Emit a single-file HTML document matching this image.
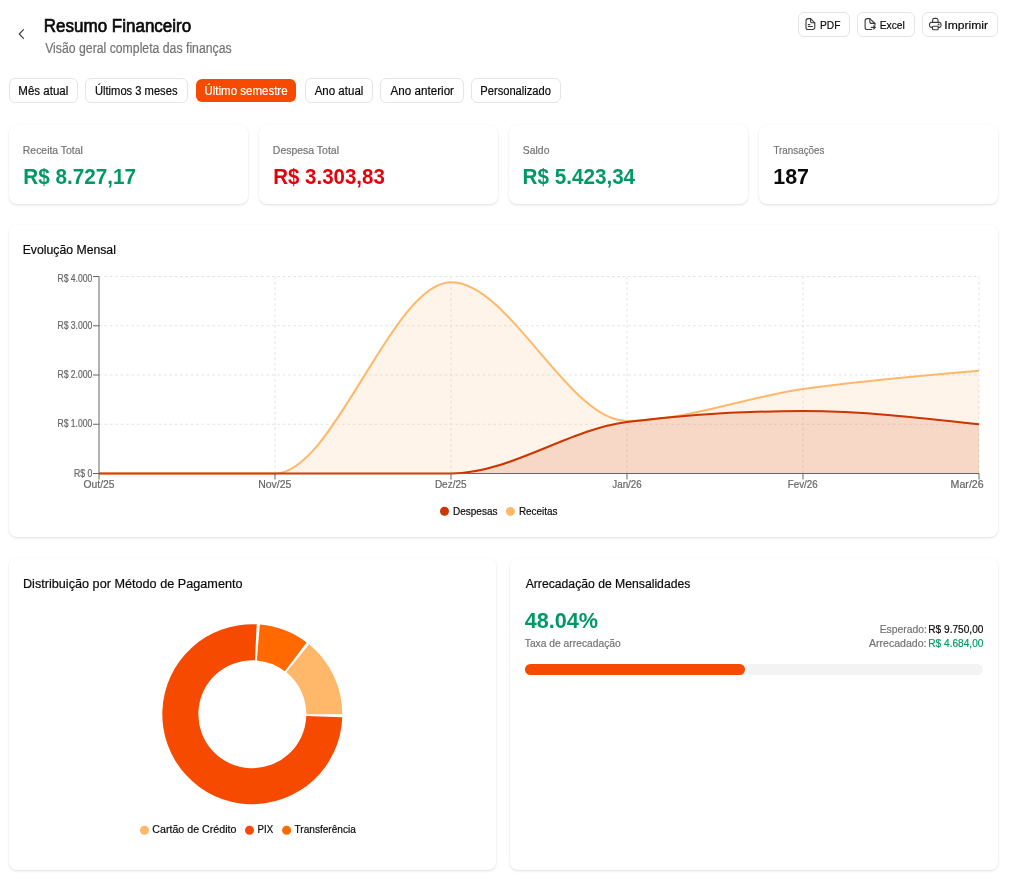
<!DOCTYPE html>
<html lang="pt-BR"><head><meta charset="utf-8"><title>Resumo Financeiro</title>
<style>
html,body{margin:0;padding:0;background:#fff;width:1013px;height:886px;overflow:hidden;}
body{position:relative;font-family:"Liberation Sans",sans-serif;}
.btn{position:absolute;box-sizing:border-box;border:1px solid #e5e5e5;border-radius:6px;background:#fff;}
.act{background:#f54a00;border:none;}
.card{position:absolute;box-sizing:border-box;border-radius:8px;background:#fff;box-shadow:0 1px 3px 0 rgba(0,0,0,0.1),0 1px 2px -1px rgba(0,0,0,0.1);}
.track{position:absolute;background:#f3f3f3;border-radius:6px;}
.fill{position:absolute;background:#f54a00;border-radius:6px;}
svg{position:absolute;left:0;top:0;will-change:transform;}
text{font-family:"Liberation Sans",sans-serif;}
</style></head><body>
<div class="btn" style="left:798px;top:12px;width:52px;height:25px;"></div><div class="btn" style="left:857px;top:12px;width:58px;height:25px;"></div><div class="btn" style="left:922px;top:12px;width:76px;height:25px;"></div><div class="btn" style="left:9px;top:78px;width:69px;height:25px;"></div><div class="btn" style="left:85px;top:78px;width:103px;height:25px;"></div><div class="btn" style="left:305px;top:78px;width:68px;height:25px;"></div><div class="btn" style="left:380px;top:78px;width:84px;height:25px;"></div><div class="btn" style="left:471px;top:78px;width:90px;height:25px;"></div><div class="btn act" style="left:196px;top:78.9px;width:100px;height:23.2px;"></div><div class="card" style="left:9px;top:125px;width:239px;height:79px;"></div><div class="card" style="left:259px;top:125px;width:239px;height:79px;"></div><div class="card" style="left:509px;top:125px;width:239px;height:79px;"></div><div class="card" style="left:759px;top:125px;width:239px;height:79px;"></div><div class="card" style="left:9px;top:225px;width:989px;height:312px;"></div><div class="card" style="left:9px;top:558px;width:487px;height:312px;"></div><div class="card" style="left:510px;top:558px;width:488px;height:312px;"></div><div class="track" style="left:525px;top:664px;width:458px;height:10.5px;"></div><div class="fill" style="left:525px;top:664px;width:220px;height:10.5px;"></div>
<svg width="1013" height="886" viewBox="0 0 1013 886">
<line x1="99.0" y1="473.5" x2="979.0" y2="473.5" stroke="#e3e3e3" stroke-dasharray="2.7 2.7"/><line x1="99.0" y1="424.25" x2="979.0" y2="424.25" stroke="#e3e3e3" stroke-dasharray="2.7 2.7"/><line x1="99.0" y1="375.0" x2="979.0" y2="375.0" stroke="#e3e3e3" stroke-dasharray="2.7 2.7"/><line x1="99.0" y1="325.75" x2="979.0" y2="325.75" stroke="#e3e3e3" stroke-dasharray="2.7 2.7"/><line x1="99.0" y1="276.5" x2="979.0" y2="276.5" stroke="#e3e3e3" stroke-dasharray="2.7 2.7"/><line x1="275.0" y1="276.5" x2="275.0" y2="473.5" stroke="#e3e3e3" stroke-dasharray="2.7 2.7"/><line x1="451.0" y1="276.5" x2="451.0" y2="473.5" stroke="#e3e3e3" stroke-dasharray="2.7 2.7"/><line x1="627.0" y1="276.5" x2="627.0" y2="473.5" stroke="#e3e3e3" stroke-dasharray="2.7 2.7"/><line x1="803.0" y1="276.5" x2="803.0" y2="473.5" stroke="#e3e3e3" stroke-dasharray="2.7 2.7"/><line x1="979.0" y1="276.5" x2="979.0" y2="473.5" stroke="#e3e3e3" stroke-dasharray="2.7 2.7"/><path d="M99.00,473.50C157.67,473.50,216.33,473.50,275.00,473.50C333.67,473.50,392.33,282.21,451.00,282.21C509.67,282.21,568.33,421.05,627.00,421.05C685.67,421.05,744.33,397.43,803.00,389.04C861.67,380.65,920.33,375.68,979.00,370.72L979.0,473.5L99.0,473.5Z" fill="#ffb86a" fill-opacity="0.15"/><path d="M99.00,473.50C157.67,473.50,216.33,473.50,275.00,473.50C333.67,473.50,392.33,282.21,451.00,282.21C509.67,282.21,568.33,421.05,627.00,421.05C685.67,421.05,744.33,397.43,803.00,389.04C861.67,380.65,920.33,375.68,979.00,370.72" fill="none" stroke="#ffb86a" stroke-width="2"/><path d="M99.00,473.50C157.67,473.50,216.33,473.50,275.00,473.50C333.67,473.50,392.33,473.50,451.00,473.50C509.67,473.50,568.33,429.36,627.00,422.03C685.67,414.71,744.33,411.05,803.00,411.05C861.67,411.05,920.33,417.63,979.00,424.20L979.0,473.5L99.0,473.5Z" fill="#ca3500" fill-opacity="0.15"/><path d="M99.00,473.50C157.67,473.50,216.33,473.50,275.00,473.50C333.67,473.50,392.33,473.50,451.00,473.50C509.67,473.50,568.33,429.36,627.00,422.03C685.67,414.71,744.33,411.05,803.00,411.05C861.67,411.05,920.33,417.63,979.00,424.20" fill="none" stroke="#ca3500" stroke-width="2"/><line x1="99.0" y1="276.5" x2="99.0" y2="473.5" stroke="#666"/><line x1="99.0" y1="473.5" x2="979.0" y2="473.5" stroke="#666"/><line x1="93.0" y1="473.5" x2="99.0" y2="473.5" stroke="#666"/><line x1="93.0" y1="424.25" x2="99.0" y2="424.25" stroke="#666"/><line x1="93.0" y1="375.0" x2="99.0" y2="375.0" stroke="#666"/><line x1="93.0" y1="325.75" x2="99.0" y2="325.75" stroke="#666"/><line x1="93.0" y1="276.5" x2="99.0" y2="276.5" stroke="#666"/><line x1="99.0" y1="473.5" x2="99.0" y2="479.5" stroke="#666"/><line x1="275.0" y1="473.5" x2="275.0" y2="479.5" stroke="#666"/><line x1="451.0" y1="473.5" x2="451.0" y2="479.5" stroke="#666"/><line x1="627.0" y1="473.5" x2="627.0" y2="479.5" stroke="#666"/><line x1="803.0" y1="473.5" x2="803.0" y2="479.5" stroke="#666"/><line x1="979.0" y1="473.5" x2="979.0" y2="479.5" stroke="#666"/><circle cx="444.5" cy="511.3" r="4.5" fill="#ca3500"/><circle cx="510.4" cy="511.4" r="4.5" fill="#ffb86a"/>
<path d="M342.30,714.20A90,90,0,0,0,309.06,644.36L286.36,672.29A54,54,0,0,1,306.30,714.20Z" fill="#ffb86a"/><path d="M306.59,642.42A90,90,0,0,0,259.83,624.52L256.82,660.39A54,54,0,0,1,284.87,671.13Z" fill="#ff6900"/><path d="M256.70,624.31A90,90,0,1,0,342.25,717.34L306.27,716.08A54,54,0,1,1,254.94,660.26Z" fill="#f54a00"/><circle cx="144.5" cy="830.3" r="4.5" fill="#ffb86a"/><circle cx="249.5" cy="830.3" r="4.5" fill="#f54a00"/><circle cx="286.6" cy="830.3" r="4.5" fill="#ff6900"/>
<g fill="none" stroke="#404040" stroke-width="1.15" stroke-linecap="round" stroke-linejoin="round"><path d="M23.5,29.6L19.3,34.0L23.5,38.4"/></g><g fill="none" stroke="#3a3a3a" stroke-width="1.1" stroke-linecap="round" stroke-linejoin="round"><path d="M810.6,18.6H808.1a2.1,2.1 0 0 0-2.1,2.1V27.4a2.1,2.1 0 0 0 2.1,2.1H812.7a2.1,2.1 0 0 0 2.1-2.1V22.8Z"/><path d="M810.6,18.6V21.4a1.4,1.4 0 0 0 1.4,1.4H814.8"/><path d="M808.3,24.6H809.9"/><path d="M808.3,26.5H812.4"/></g><g fill="none" stroke="#3a3a3a" stroke-width="1.1" stroke-linecap="round" stroke-linejoin="round"><path d="M871.8,29.5H867.2a2.1,2.1 0 0 1-2.1-2.1V20.7a2.1,2.1 0 0 1 2.1-2.1H869.8L874.9,23.5V25.6"/><path d="M869.8,18.6V21.4a2,2 0 0 0 2,2H874.9"/><path d="M871.2,27.4H875.2"/><path d="M873.6,25.8L875.2,27.4L873.6,29.0"/></g><g fill="none" stroke="#3a3a3a" stroke-width="1.1" stroke-linecap="round" stroke-linejoin="round"><path d="M932.6,22.4V20.2a1.8,1.8 0 0 1 1.8-1.8H936.2a1.8,1.8 0 0 1 1.8,1.8V22.4"/><path d="M932.4,27.4H931.4a1.8,1.8 0 0 1-1.8-1.8V24.2a1.8,1.8 0 0 1 1.8-1.8H939.2a1.8,1.8 0 0 1 1.8,1.8V25.6a1.8,1.8 0 0 1-1.8,1.8H938.2"/><path d="M933.4,26.2H937.3a0.9,0.9 0 0 1 0.9,0.9V28.9a0.9,0.9 0 0 1-0.9,0.9H933.4a0.9,0.9 0 0 1-0.9-0.9V27.1a0.9,0.9 0 0 1 0.9-0.9Z"/><circle cx="938.6" cy="24.4" r="0.35" fill="#3a3a3a"/></g>
<text x="43.81" y="32.10" font-size="18.75" font-weight="normal" fill="#0a0a0a" stroke="#0a0a0a" stroke-width="0.7" textLength="147.41" lengthAdjust="spacingAndGlyphs">Resumo Financeiro</text><text x="45.15" y="53.00" font-size="14" font-weight="normal" fill="#737373" stroke="#737373" stroke-width="0.2" textLength="186.50" lengthAdjust="spacingAndGlyphs">Visão geral completa das finanças</text><text x="819.96" y="29.00" font-size="11.6" font-weight="normal" fill="#0a0a0a" stroke="#0a0a0a" stroke-width="0.2" textLength="20.45" lengthAdjust="spacingAndGlyphs">PDF</text><text x="879.65" y="29.00" font-size="11.6" font-weight="normal" fill="#0a0a0a" stroke="#0a0a0a" stroke-width="0.2" textLength="25.24" lengthAdjust="spacingAndGlyphs">Excel</text><text x="944.28" y="29.00" font-size="11.6" font-weight="normal" fill="#0a0a0a" stroke="#0a0a0a" stroke-width="0.2" textLength="43.72" lengthAdjust="spacingAndGlyphs">Imprimir</text><text x="18.36" y="95.00" font-size="12" font-weight="normal" fill="#0a0a0a" stroke="#0a0a0a" stroke-width="0.2" textLength="49.91" lengthAdjust="spacingAndGlyphs">Mês atual</text><text x="94.94" y="95.00" font-size="12" font-weight="normal" fill="#0a0a0a" stroke="#0a0a0a" stroke-width="0.2" textLength="82.57" lengthAdjust="spacingAndGlyphs">Últimos 3 meses</text><text x="204.51" y="95.00" font-size="12" font-weight="normal" fill="#ffffff" stroke="#ffffff" stroke-width="0.2" textLength="83.10" lengthAdjust="spacingAndGlyphs">Último semestre</text><text x="314.68" y="95.00" font-size="12" font-weight="normal" fill="#0a0a0a" stroke="#0a0a0a" stroke-width="0.2" textLength="48.69" lengthAdjust="spacingAndGlyphs">Ano atual</text><text x="390.58" y="95.00" font-size="12" font-weight="normal" fill="#0a0a0a" stroke="#0a0a0a" stroke-width="0.2" textLength="63.42" lengthAdjust="spacingAndGlyphs">Ano anterior</text><text x="480.29" y="95.00" font-size="12" font-weight="normal" fill="#0a0a0a" stroke="#0a0a0a" stroke-width="0.2" textLength="70.68" lengthAdjust="spacingAndGlyphs">Personalizado</text><text x="22.85" y="154.00" font-size="11.2" font-weight="normal" fill="#737373" stroke="#737373" stroke-width="0.2" textLength="59.95" lengthAdjust="spacingAndGlyphs">Receita Total</text><text x="272.84" y="154.00" font-size="11.2" font-weight="normal" fill="#737373" stroke="#737373" stroke-width="0.2" textLength="66.16" lengthAdjust="spacingAndGlyphs">Despesa Total</text><text x="522.83" y="154.00" font-size="11.2" font-weight="normal" fill="#737373" stroke="#737373" stroke-width="0.2" textLength="26.61" lengthAdjust="spacingAndGlyphs">Saldo</text><text x="773.48" y="154.00" font-size="11.2" font-weight="normal" fill="#737373" stroke="#737373" stroke-width="0.2" textLength="50.88" lengthAdjust="spacingAndGlyphs">Transações</text><text x="23.22" y="184.20" font-size="22" font-weight="bold" fill="#009966" textLength="112.69" lengthAdjust="spacingAndGlyphs">R$ 8.727,17</text><text x="273.23" y="184.20" font-size="22" font-weight="bold" fill="#e7000b" textLength="111.61" lengthAdjust="spacingAndGlyphs">R$ 3.303,83</text><text x="522.62" y="184.20" font-size="22" font-weight="bold" fill="#009966" textLength="112.49" lengthAdjust="spacingAndGlyphs">R$ 5.423,34</text><text x="773.25" y="184.20" font-size="22" font-weight="bold" fill="#0a0a0a" textLength="35.69" lengthAdjust="spacingAndGlyphs">187</text><text x="22.70" y="253.60" font-size="12.5" font-weight="normal" fill="#0a0a0a" stroke="#0a0a0a" stroke-width="0.2" textLength="93.22" lengthAdjust="spacingAndGlyphs">Evolução Mensal</text><text x="452.98" y="514.80" font-size="11.2" font-weight="normal" fill="#0a0a0a" stroke="#0a0a0a" stroke-width="0.2" textLength="44.48" lengthAdjust="spacingAndGlyphs">Despesas</text><text x="518.88" y="514.80" font-size="11.2" font-weight="normal" fill="#0a0a0a" stroke="#0a0a0a" stroke-width="0.2" textLength="38.68" lengthAdjust="spacingAndGlyphs">Receitas</text><text x="73.99" y="476.90" font-size="10.2" font-weight="normal" fill="#666666" stroke="#666666" stroke-width="0.2" textLength="18.35" lengthAdjust="spacingAndGlyphs">R$ 0</text><text x="57.49" y="427.00" font-size="10.2" font-weight="normal" fill="#666666" stroke="#666666" stroke-width="0.2" textLength="34.84" lengthAdjust="spacingAndGlyphs">R$ 1.000</text><text x="57.49" y="378.00" font-size="10.2" font-weight="normal" fill="#666666" stroke="#666666" stroke-width="0.2" textLength="34.84" lengthAdjust="spacingAndGlyphs">R$ 2.000</text><text x="57.49" y="329.00" font-size="10.2" font-weight="normal" fill="#666666" stroke="#666666" stroke-width="0.2" textLength="34.84" lengthAdjust="spacingAndGlyphs">R$ 3.000</text><text x="57.49" y="281.90" font-size="10.2" font-weight="normal" fill="#666666" stroke="#666666" stroke-width="0.2" textLength="34.84" lengthAdjust="spacingAndGlyphs">R$ 4.000</text><text x="83.61" y="487.80" font-size="10.2" font-weight="normal" fill="#666666" stroke="#666666" stroke-width="0.2" textLength="30.92" lengthAdjust="spacingAndGlyphs">Out/25</text><text x="258.24" y="487.80" font-size="10.2" font-weight="normal" fill="#666666" stroke="#666666" stroke-width="0.2" textLength="33.10" lengthAdjust="spacingAndGlyphs">Nov/25</text><text x="434.88" y="487.80" font-size="10.2" font-weight="normal" fill="#666666" stroke="#666666" stroke-width="0.2" textLength="31.74" lengthAdjust="spacingAndGlyphs">Dez/25</text><text x="612.35" y="487.80" font-size="10.2" font-weight="normal" fill="#666666" stroke="#666666" stroke-width="0.2" textLength="29.38" lengthAdjust="spacingAndGlyphs">Jan/26</text><text x="787.69" y="487.80" font-size="10.2" font-weight="normal" fill="#666666" stroke="#666666" stroke-width="0.2" textLength="30.04" lengthAdjust="spacingAndGlyphs">Fev/26</text><text x="950.63" y="487.80" font-size="10.2" font-weight="normal" fill="#666666" stroke="#666666" stroke-width="0.2" textLength="33.04" lengthAdjust="spacingAndGlyphs">Mar/26</text><text x="22.96" y="587.80" font-size="12.5" font-weight="normal" fill="#0a0a0a" stroke="#0a0a0a" stroke-width="0.2" textLength="219.57" lengthAdjust="spacingAndGlyphs">Distribuição por Método de Pagamento</text><text x="525.68" y="587.80" font-size="12.5" font-weight="normal" fill="#0a0a0a" stroke="#0a0a0a" stroke-width="0.2" textLength="164.66" lengthAdjust="spacingAndGlyphs">Arrecadação de Mensalidades</text><text x="152.26" y="832.80" font-size="11.2" font-weight="normal" fill="#0a0a0a" stroke="#0a0a0a" stroke-width="0.2" textLength="84.19" lengthAdjust="spacingAndGlyphs">Cartão de Crédito</text><text x="257.61" y="832.80" font-size="11.2" font-weight="normal" fill="#0a0a0a" stroke="#0a0a0a" stroke-width="0.2" textLength="15.60" lengthAdjust="spacingAndGlyphs">PIX</text><text x="294.47" y="832.80" font-size="11.2" font-weight="normal" fill="#0a0a0a" stroke="#0a0a0a" stroke-width="0.2" textLength="61.43" lengthAdjust="spacingAndGlyphs">Transferência</text><text x="524.67" y="628.00" font-size="22" font-weight="bold" fill="#009966" textLength="73.40" lengthAdjust="spacingAndGlyphs">48.04%</text><text x="524.77" y="647.00" font-size="11.2" font-weight="normal" fill="#737373" stroke="#737373" stroke-width="0.2" textLength="95.96" lengthAdjust="spacingAndGlyphs">Taxa de arrecadação</text><text x="879.65" y="633.00" font-size="11.2" font-weight="normal" fill="#737373" stroke="#737373" stroke-width="0.2" textLength="47.30" lengthAdjust="spacingAndGlyphs">Esperado:</text><text x="928.27" y="633.00" font-size="11.2" font-weight="normal" fill="#0a0a0a" stroke="#0a0a0a" stroke-width="0.2" textLength="55.13" lengthAdjust="spacingAndGlyphs">R$ 9.750,00</text><text x="868.98" y="646.80" font-size="11.2" font-weight="normal" fill="#737373" stroke="#737373" stroke-width="0.2" textLength="57.59" lengthAdjust="spacingAndGlyphs">Arrecadado:</text><text x="928.27" y="646.80" font-size="11.2" font-weight="normal" fill="#009966" stroke="#009966" stroke-width="0.2" textLength="55.13" lengthAdjust="spacingAndGlyphs">R$ 4.684,00</text>
</svg>
</body></html>
